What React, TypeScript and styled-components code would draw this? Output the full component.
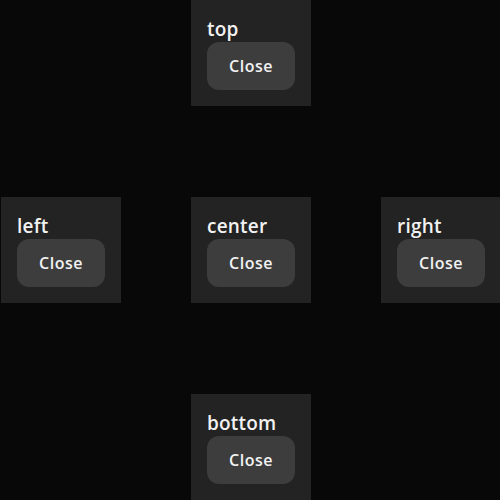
import React from 'react';
import styled, { createGlobalStyle } from 'styled-components';

const GlobalStyle = createGlobalStyle`
  html, body {
    margin: 0;
    padding: 0;
    background: #080808;
  }
  body {
    font-family: 'Open Sans', 'Noto Sans', sans-serif;
    color: #f2f2f2;
  }
`;

type Placement = 'top' | 'left' | 'center' | 'right' | 'bottom';

const areas: Record<Placement, string> = {
  top: '1 / 2',
  left: '2 / 1',
  center: '2 / 2',
  right: '2 / 3',
  bottom: '3 / 2',
};

const Stage = styled.div`
  width: 500px;
  height: 500px;
  overflow: hidden;
  display: grid;
  grid-template-columns: repeat(3, 120px);
  grid-template-rows: repeat(3, 106px);
  column-gap: 70px;
  row-gap: 91px;
  padding-left: 1px;
  box-sizing: border-box;
`;

const Panel = styled.div<{ $placement: Placement }>`
  grid-area: ${({ $placement }) => areas[$placement]};
  background: #232323;
  padding: 16px;
  box-sizing: border-box;
  display: flex;
  flex-direction: column;
`;

const Label = styled.div`
  font-size: 19px;
  font-weight: 600;
  letter-spacing: 0.2px;
  line-height: 24px;
  height: 26px;
  padding-top: 1px;
  box-sizing: border-box;
`;

const CloseButton = styled.button`
  width: 88px;
  height: 48px;
  border: none;
  border-radius: 12px;
  background: #3d3d3d;
  color: #f2f2f2;
  font-family: inherit;
  font-size: 16px;
  font-weight: 600;
  letter-spacing: 0.5px;
  cursor: pointer;
`;

const placements: Placement[] = ['top', 'left', 'center', 'right', 'bottom'];

export default function App() {
  return (
    <>
      <GlobalStyle />
      <Stage>
        {placements.map((p) => (
          <Panel key={p} $placement={p}>
            <Label>{p}</Label>
            <CloseButton>Close</CloseButton>
          </Panel>
        ))}
      </Stage>
    </>
  );
}
